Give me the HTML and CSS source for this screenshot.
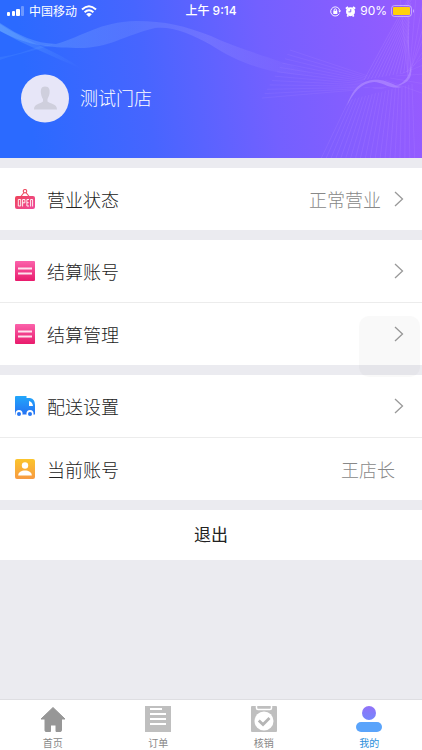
FILE: index.html
```html
<!DOCTYPE html>
<html lang="zh-CN">
<head>
<meta charset="utf-8">
<meta name="viewport" content="width=device-width, initial-scale=1">
<title>我的</title>
<link rel="stylesheet" href="styles.css">
</head>
<body>
<svg class="defs" width="0" height="0" aria-hidden="true">
  <defs>
    <linearGradient id="pink" x1="0" y1="0" x2="0" y2="1"><stop offset="0" stop-color="#fb62ab"/><stop offset="1" stop-color="#e91b6c"/></linearGradient>
    <linearGradient id="sign" x1="0" y1="0" x2="1" y2="1"><stop offset="0" stop-color="#ee4459"/><stop offset="1" stop-color="#f04a9c"/></linearGradient>
    <linearGradient id="blue" x1="0" y1="0" x2="0" y2="1"><stop offset="0" stop-color="#22a7fb"/><stop offset="1" stop-color="#2672f3"/></linearGradient>
    <linearGradient id="gold" x1="0" y1="0" x2="0" y2="1"><stop offset="0" stop-color="#fbc52c"/><stop offset="1" stop-color="#f79a42"/></linearGradient>
    <linearGradient id="head" x1="0" y1="0" x2="0" y2="1"><stop offset="0" stop-color="#9272f8"/><stop offset="1" stop-color="#7487fb"/></linearGradient>
  </defs>
</svg>
<div class="app">
  <header class="hero">
    <svg class="waves" viewBox="0 0 422 158" preserveAspectRatio="none" aria-hidden="true">
      <defs>
        <linearGradient id="ribbon" gradientUnits="userSpaceOnUse" x1="0" y1="0" x2="320" y2="0"><stop offset="0" stop-color="#6fb0ff" stop-opacity=".4"/><stop offset=".4" stop-color="#8aa8ff" stop-opacity=".22"/><stop offset=".65" stop-color="#a5a0ff" stop-opacity=".25"/><stop offset="1" stop-color="#a58cff" stop-opacity="0"/></linearGradient>
        <linearGradient id="streak" gradientUnits="userSpaceOnUse" x1="0" y1="0" x2="82" y2="0"><stop offset="0" stop-color="#6fb0ff" stop-opacity=".4"/><stop offset="1" stop-color="#6fb0ff" stop-opacity="0"/></linearGradient>
      </defs>
      <path fill="url(#ribbon)" d="M0 23C20 36 34 43 56 44C84 36 99 22 136 21C165 21 185 26 211 36C240 50 272 57 320 76C272 76 236 62 211 45C190 33 172 26 155 28C122 36 108 49 76 48C50 47 30 47 0 31Z"/>
      <path fill="url(#streak)" d="M0 24C26 42 54 49 82 69C50 55 25 45 0 31Z"/>
      <path fill="#6fb0ff" fill-opacity=".14" d="M0 60C20 53 36 51 54 44L40 46C27 51 14 55 0 57Z"/>
      <g id="rays" fill="none" stroke="#c9a0ff" stroke-width=".7"></g>
      <path fill="#c4a4ff" fill-opacity=".45" d="M347 106C354 83 367 79 380 80C390 81 394 86 402 87C390 90 383 82 374 82C361 83 353 93 347 106Z"/>
      <path fill="#c4a4ff" fill-opacity=".45" d="M362 87C380 89 408 92 411 66C413 80 408 91 362 87Z"/>
    </svg>
    <div class="status">
      <div class="status-side">
        <svg width="18" height="10" viewBox="0 0 18 10" fill="#fff" aria-hidden="true"><rect y="6" width="3" height="4" rx="1"/><rect x="5" y="5" width="3" height="5" rx="1"/><rect x="9" y="3" width="4" height="7" rx="1"/><rect x="14" width="3" height="10" rx="1" opacity=".3"/></svg>
        <span>中国移动</span>
        <svg width="16" height="12" viewBox="0 0 16 12" fill="none" stroke="#fff" stroke-width="2" aria-hidden="true"><path d="M1 4.5Q8-1.9 15 4.5M3.6 7.2Q8 3.2 12.4 7.2"/><path fill="#fff" stroke="none" d="M8 12L5.2 9.2Q8 7 10.8 9.2Z"/></svg>
      </div>
      <span class="time">上午 9:14</span>
      <div class="status-side status-end">
        <svg width="11" height="11" viewBox="0 0 12 12" fill="none" stroke="#fff" aria-hidden="true"><path d="M10.2 8.3A5 5 0 1 1 10.7 5"/><path fill="#fff" stroke="none" d="M9 5H12L10.6 7.4ZM3.6 5.3H8V8.8H3.6Z"/><path d="M4.5 5.5V4.4A1.3 1.3 0 0 1 7.1 4.4V5.5"/></svg>
        <svg width="11" height="11" viewBox="0 0 12 12" aria-hidden="true"><path d="M1 3L3.3 1M11 3L8.7 1M2.5 11.5L3.5 10M9.5 11.5L8.5 10" stroke="#fff" stroke-width="2"/><circle cx="6" cy="6.2" r="4.9" fill="#fff"/><path d="M6.3 3.4V6.4H3.8" fill="none" stroke="#7a5df5"/></svg>
        <span class="percent">90%</span>
        <svg width="24" height="12" viewBox="0 0 24 12" aria-hidden="true"><rect x=".5" y=".5" width="20" height="11" rx="3" fill="none" stroke="#fff" stroke-opacity=".45"/><rect x="2" y="2" width="17" height="8" rx="1" fill="#ffd00b"/><path d="M22 4Q24 6 22 8Z" fill="#fff" fill-opacity=".5"/></svg>
      </div>
    </div>
    <div class="profile">
      <svg class="avatar" viewBox="0 0 48 48" aria-hidden="true"><circle cx="24" cy="24" r="24" fill="#e7e6f8"/><path fill="#cfcfdd" d="M24 12C28.500 12 29 15.500 28.500 19C28 22 27 23 26.500 24.500V27C29 29.500 36 29 36 35H13C13 29 19.500 29.500 22 27V24.500C21 23 20.500 22 20 19C19.500 15.500 20 12 24 12Z"/></svg>
      <h1 class="name">测试门店</h1>
    </div>
  </header>

  <main class="content">
    <section class="group">
      <button type="button" class="row">
        <svg class="icon" viewBox="0 0 20 20" aria-hidden="true"><path d="M5.500 8L9 3.500M14.500 8L11 3.500" fill="none" stroke="#ee5267" stroke-width="1.200"/><circle cx="10" cy="2.200" r="1.700" fill="#fff" stroke="#ee5267" stroke-width="1.200"/><rect y="7" width="20" height="13" rx="2" fill="url(#sign)"/><path fill="none" stroke="#fff" stroke-opacity=".9" d="M3.300 10.500H5.700V17H3.300ZM7.600 17.500V10.500H9.900V13.800H7.600M14 10.500H11.900V17H14M11.900 13.700H13.700M15.600 17.500V10.500H17.600V17.500"/></svg>
        <span class="label">营业状态</span><span class="value">正常营业</span>
        <svg class="chevron" viewBox="0 0 10 16" aria-hidden="true"><path d="M1 1L8.500 8L1 15"/></svg>
      </button>
    </section>
    <section class="group">
      <button type="button" class="row">
        <svg class="icon" viewBox="0 0 20 20" aria-hidden="true"><rect width="20" height="20" rx="1" fill="url(#pink)"/><path d="M3 7.500H17M3 12.500H17" stroke="#fff" stroke-opacity=".85" stroke-width="2"/></svg>
        <span class="label">结算账号</span>
        <svg class="chevron" viewBox="0 0 10 16" aria-hidden="true"><path d="M1 1L8.500 8L1 15"/></svg>
      </button>
      <button type="button" class="row">
        <svg class="icon" viewBox="0 0 20 20" aria-hidden="true"><rect width="20" height="20" rx="1" fill="url(#pink)"/><path d="M3 7.500H17M3 12.500H17" stroke="#fff" stroke-opacity=".85" stroke-width="2"/></svg>
        <span class="label">结算管理</span>
        <svg class="chevron" viewBox="0 0 10 16" aria-hidden="true"><path d="M1 1L8.500 8L1 15"/></svg>
      </button>
      <div class="assist"></div>
    </section>
    <section class="group">
      <button type="button" class="row">
        <svg class="icon" viewBox="0 0 20 20" aria-hidden="true"><path fill="url(#blue)" d="M0 1Q0 0 1 0H11.500V2H15Q20 3 20 9V18.500H0Z"/><path fill="#fff" d="M14 5V10H18Q17.500 6 14 5Z"/><circle cx="4" cy="17.500" r="3.500" fill="#fff"/><circle cx="15" cy="17.500" r="3.500" fill="#fff"/><circle cx="4" cy="18" r="2" fill="#2678f4"/><circle cx="15" cy="18" r="2" fill="#2678f4"/></svg>
        <span class="label">配送设置</span>
        <svg class="chevron" viewBox="0 0 10 16" aria-hidden="true"><path d="M1 1L8.500 8L1 15"/></svg>
      </button>
      <div class="row">
        <svg class="icon" viewBox="0 0 20 20" aria-hidden="true"><rect width="20" height="20" rx="2" fill="url(#gold)"/><circle cx="10" cy="6.500" r="3.200" fill="#fff"/><path fill="#fff" d="M3.200 16.500C3.200 13 6.500 11.500 10 11.500S16.800 13 16.800 16.500Z"/></svg>
        <span class="label">当前账号</span><span class="value">王店长</span>
      </div>
    </section>
    <button type="button" class="logout">退出</button>
  </main>

  <nav class="tabs">
    <a class="tab" href="#home">
      <svg viewBox="0 0 26 26" aria-hidden="true"><path fill="#979797" stroke="#979797" stroke-linejoin="round" d="M13 1.500L25 13H21.500V24.500Q21.500 25.500 20 25.500H16V19H10.500V25.500H6Q5 25.500 5 24.500V13H1Z"/></svg>
      <span>首页</span>
    </a>
    <a class="tab" href="#orders">
      <svg viewBox="0 0 26 26" aria-hidden="true"><path fill="#bfbfbf" d="M0 0H26V26H0Z"/><path stroke="#fff" stroke-width="2" d="M5 3H17M5 8H21M5 13H21M5 18H21"/></svg>
      <span>订单</span>
    </a>
    <a class="tab" href="#verify">
      <svg viewBox="0 0 26 26" aria-hidden="true"><rect width="26" height="26" rx="1" fill="#bfbfbf"/><path fill="none" stroke="#fff" stroke-width="1.500" d="M5.500 0V2Q5.500 3.500 7 3.500H19Q20.500 3.500 20.500 2V0"/><circle cx="13" cy="15" r="9.500" fill="#fff"/><path fill="none" stroke="#b5b5b5" stroke-width="2.800" d="M7.800 14.500L12 18.500L18.500 12"/></svg>
      <span>核销</span>
    </a>
    <a class="tab active" href="#mine" aria-current="page">
      <svg viewBox="0 0 26 26" aria-hidden="true"><circle cx="13" cy="7" r="7" fill="url(#head)"/><rect y="16" width="26" height="10" rx="5" fill="#5aa4fb"/></svg>
      <span>我的</span>
    </a>
  </nav>
</div>
<script src="rays.js"></script>
</body>
</html>
```
FILE: styles.css
```css
* { box-sizing: border-box; }

body {
  margin: 0;
  background: #ebebf0;
  color: #222;
  font-family: "Noto Sans CJK SC", sans-serif;
  font-weight: 300;
}

button {
  border: 0;
  background: none;
  font: inherit;
  color: inherit;
  text-align: left;
}

.defs { position: absolute; }

.app {
  min-height: 100vh;
  display: flex;
  flex-direction: column;
}

.hero {
  position: relative;
  padding-bottom: 35px;
  background: linear-gradient(82deg, #2b6aff 8%, #4765ff 35%, #7360ff 63%, #995bff 100%);
  color: #fff;
}

.waves {
  position: absolute;
  inset: 0;
  width: 100%;
  height: 100%;
}

.status {
  position: relative;
  height: 22px;
  padding: 0 7px;
  display: flex;
  align-items: center;
  font-size: 12px;
  font-weight: 400;
  line-height: 16px;
}

.status-side {
  flex: 1;
  display: flex;
  align-items: center;
  gap: 4px;
}

.status-end { justify-content: flex-end; }

.time, .percent { font-family: Inter, "Noto Sans CJK SC", sans-serif; }

.time { font-weight: 500; }

.profile {
  position: relative;
  margin-top: 52px;
  padding: 0 21px;
  display: flex;
  align-items: center;
  gap: 11px;
}

.avatar {
  width: 48px;
  height: 49px;
}

.name {
  margin: 0;
  padding-bottom: 3px;
  font-size: 18px;
  font-weight: 300;
}

.content {
  flex: 1;
  padding: 10px 0;
  display: flex;
  flex-direction: column;
  gap: 10px;
}

.group {
  position: relative;
  background: #fff;
}

.row {
  width: 100%;
  height: 62px;
  padding: 0 18px 0 15px;
  display: flex;
  align-items: center;
  font-size: 18px;
}

.row + .row {
  height: 63px;
  border-top: 1px solid #ececec;
}

.icon {
  width: 20px;
  height: 20px;
  margin-right: 12px;
}

.label { flex: 1; }

.label, .value { padding-bottom: 1px; }

.value { color: #888; }

div.row { padding-right: 27px; }

.chevron {
  width: 10px;
  height: 16px;
  margin-left: 13px;
  fill: none;
  stroke: #999;
  stroke-width: 1.3;
}

.assist {
  position: absolute;
  z-index: 1;
  right: 2px;
  bottom: -12px;
  width: 61px;
  height: 61px;
  border-radius: 10px;
  background: rgba(90, 90, 100, .04);
}

.logout {
  height: 50px;
  padding: 0 0 4px;
  background: #fff;
  font-size: 17px;
  font-weight: 400;
  text-align: center;
}

.tabs {
  height: 50px;
  padding-top: 6px;
  display: flex;
  background: #fff;
  box-shadow: 0 -1px 0 #dedee2;
}

.tab {
  flex: 1;
  display: flex;
  flex-direction: column;
  align-items: center;
  gap: 3px;
  color: #888;
  font-size: 10px;
  font-weight: 400;
  line-height: 15px;
  text-decoration: none;
}

.tab svg {
  width: 26px;
  height: 26px;
}

.tab.active { color: #2d8fdc; }
```
FILE: rays.js
```js
// Fans of fine lines: each runs between two segments [x1, y1, x2, y2].
const fans = [
  { from: [364, 80, 411, 72], to: [412, -8, 408, 40], count: 14, opacity: 0.26 },
  { from: [408, 78, 412, 66], to: [400, -4, 440, -4], count: 6, opacity: 0.22 },
  { from: [349, 100, 412, 84], to: [318, 165, 415, 165], count: 20, opacity: 0.2 },
  { from: [368, 76, 356, 90], to: [290, 50, 262, 98], count: 12, opacity: 0.14 },
  { from: [385, 80, 411, 70], to: [430, 96, 430, 40], count: 6, opacity: 0.18 }
];

const group = document.getElementById("rays");
for (const { from, to, count, opacity } of fans) {
  for (let i = 0; i < count; i++) {
    const t = i / (count - 1);
    const at = (s, k) => s[k] + (s[k + 2] - s[k]) * t;
    const line = document.createElementNS("http://www.w3.org/2000/svg", "line");
    line.setAttribute("x1", at(from, 0));
    line.setAttribute("y1", at(from, 1));
    line.setAttribute("x2", at(to, 0));
    line.setAttribute("y2", at(to, 1));
    line.setAttribute("stroke-opacity", opacity);
    group.appendChild(line);
  }
}
```
